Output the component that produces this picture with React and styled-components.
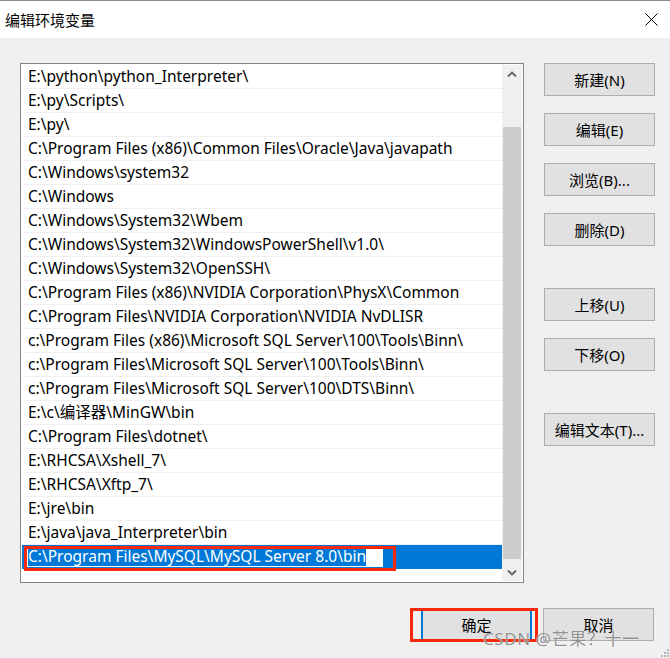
import React from 'react';
import styled, { createGlobalStyle } from 'styled-components';

const GlobalStyle = createGlobalStyle`
  html, body {
    margin: 0;
    padding: 0;
    background: #f0f0f0;
  }
  body {
    font-family: "Noto Sans", "Noto Sans CJK SC", sans-serif;
    font-size: 15px;
    color: #000;
  }
`;

const Window = styled.div`
  position: relative;
  width: 670px;
  height: 658px;
  box-sizing: border-box;
  border-top: 1px solid #8c8c8c;
  background: #f0f0f0;
  display: flex;
  flex-direction: column;
  overflow: hidden;
`;

const TitleBar = styled.div`
  height: 37px;
  background: #fff;
  display: flex;
  align-items: center;
  justify-content: space-between;
  padding: 0 12px 0 5px;
`;

const Title = styled.span`
  font-family: "Noto Sans CJK SC", sans-serif;
  font-size: 15px;
  margin-top: -1px;
`;

const Body = styled.div`
  display: flex;
  padding: 25px 0 0 20px;
  gap: 20px;
`;

const ListBox = styled.div`
  width: 504px;
  height: 520px;
  box-sizing: border-box;
  border: 1px solid #838383;
  background: #fff;
  padding: 1px;
  display: flex;
`;

const Rows = styled.div`
  flex: 1;
  display: flex;
  flex-direction: column;
`;

const Row = styled.div`
  height: 24px;
  box-sizing: border-box;
  border-bottom: 1px solid ${(p) => (p.$selected ? '#0078d7' : '#f0f0f0')};
  background: ${(p) => (p.$selected ? '#0078d7' : '#fff')};
  display: flex;
  align-items: center;
  padding-left: 6px;
  white-space: nowrap;
  line-height: 1;
  font-size: 15.5px;
`;

const EditBox = styled.span`
  display: flex;
  align-items: center;
  height: 20px;
  width: 356px;
  margin-left: -1px;
  box-sizing: border-box;
  border: 1px solid #fff;
  background: #fff;
`;

const Selected = styled.span`
  background: #0078d7;
  color: #fff;
  height: 100%;
  display: flex;
  align-items: center;
`;

const Scrollbar = styled.div`
  width: 20px;
  background: #f0f0f0;
  display: flex;
  flex-direction: column;
`;

const ArrowButton = styled.div`
  height: 17px;
  display: flex;
  align-items: center;
  justify-content: center;
`;

const Track = styled.div`
  flex: 1;
  display: flex;
  flex-direction: column;
  justify-content: flex-end;
  padding: 0 1px 5px;
`;

const Thumb = styled.div`
  height: 432px;
  background: #cdcdcd;
`;

const ButtonColumn = styled.div`
  display: flex;
  flex-direction: column;
`;

const Button = styled.div`
  width: 111px;
  height: 33px;
  box-sizing: border-box;
  background: #e1e1e1;
  border: 1px solid ${(p) => (p.$focus ? '#0078d7' : '#adadad')};
  box-shadow: ${(p) => (p.$focus ? 'inset 0 0 0 1px #0078d7' : 'none')};
  display: flex;
  align-items: center;
  justify-content: center;
  font-family: "Noto Sans", "Noto Sans CJK SC", sans-serif;
  font-size: 15px;
  margin-top: ${(p) => p.$gap || 0}px;
`;

const Footer = styled.div`
  display: flex;
  justify-content: flex-end;
  gap: 11px;
  padding: 25px 16px 0 0;
`;

const Mark = styled.div`
  position: absolute;
  border: 3px solid #f5280a;
  pointer-events: none;
`;

const Watermark = styled.div`
  position: absolute;
  z-index: 2;
  left: 483px;
  top: 624px;
  font-family: "Noto Sans", "Noto Sans CJK SC", sans-serif;
  font-size: 17px;
  color: rgba(125, 125, 125, 0.85);
  text-shadow: 0 0 1px #fff;
  letter-spacing: 0.6px;
  white-space: nowrap;
`;

const Grip = styled.svg`
  position: absolute;
  right: 1px;
  bottom: 1px;
`;

const paths = [
  'E:\\python\\python_Interpreter\\',
  'E:\\py\\Scripts\\',
  'E:\\py\\',
  'C:\\Program Files (x86)\\Common Files\\Oracle\\Java\\javapath',
  'C:\\Windows\\system32',
  'C:\\Windows',
  'C:\\Windows\\System32\\Wbem',
  'C:\\Windows\\System32\\WindowsPowerShell\\v1.0\\',
  'C:\\Windows\\System32\\OpenSSH\\',
  'C:\\Program Files (x86)\\NVIDIA Corporation\\PhysX\\Common',
  'C:\\Program Files\\NVIDIA Corporation\\NVIDIA NvDLISR',
  'c:\\Program Files (x86)\\Microsoft SQL Server\\100\\Tools\\Binn\\',
  'c:\\Program Files\\Microsoft SQL Server\\100\\Tools\\Binn\\',
  'c:\\Program Files\\Microsoft SQL Server\\100\\DTS\\Binn\\',
  'E:\\c\\编译器\\MinGW\\bin',
  'C:\\Program Files\\dotnet\\',
  'E:\\RHCSA\\Xshell_7\\',
  'E:\\RHCSA\\Xftp_7\\',
  'E:\\jre\\bin',
  'E:\\java\\java_Interpreter\\bin',
];

const Chevron = ({ up }) => (
  <svg width="10" height="6" viewBox="0 0 10 6">
    <path
      d={up ? 'M1 5.5 L5 1.5 L9 5.5' : 'M1 0.5 L5 4.5 L9 0.5'}
      fill="none"
      stroke="#606060"
      strokeWidth="1.8"
    />
  </svg>
);

const App = () => {
  return (
    <Window>
      <GlobalStyle />
      <TitleBar>
        <Title>编辑环境变量</Title>
        <svg width="13" height="13" viewBox="0 0 13 13">
          <path d="M0.5 0.5 L12.5 12.5 M12.5 0.5 L0.5 12.5" stroke="#000" strokeWidth="1" />
        </svg>
      </TitleBar>
      <Body>
        <ListBox>
          <Rows>
            {paths.map((p) => (
              <Row key={p}>{p}</Row>
            ))}
            <Row $selected>
              <EditBox>
                <Selected>C:\Program Files\MySQL\MySQL Server 8.0\bin</Selected>
              </EditBox>
            </Row>
          </Rows>
          <Scrollbar>
            <ArrowButton>
              <Chevron up />
            </ArrowButton>
            <Track>
              <Thumb />
            </Track>
            <ArrowButton>
              <Chevron />
            </ArrowButton>
          </Scrollbar>
        </ListBox>
        <ButtonColumn>
          <Button>新建(N)</Button>
          <Button $gap={17}>编辑(E)</Button>
          <Button $gap={17}>浏览(B)...</Button>
          <Button $gap={17}>删除(D)</Button>
          <Button $gap={42}>上移(U)</Button>
          <Button $gap={17}>下移(O)</Button>
          <Button $gap={42}>编辑文本(T)...</Button>
        </ButtonColumn>
      </Body>
      <Footer>
        <Button $focus>确定</Button>
        <Button>取消</Button>
      </Footer>
      <Mark style={{ left: 24, top: 545, width: 366, height: 19 }} />
      <Mark style={{ left: 410, top: 607, width: 122, height: 28 }} />
      <Watermark>CSDN @芒果？十一</Watermark>
      <Grip width="8" height="8" viewBox="0 0 8 8">
        <rect x="6" y="0" width="2" height="2" fill="#b8b8b8" />
        <rect x="3" y="3" width="2" height="2" fill="#b8b8b8" />
        <rect x="6" y="3" width="2" height="2" fill="#b8b8b8" />
        <rect x="0" y="6" width="2" height="2" fill="#b8b8b8" />
        <rect x="3" y="6" width="2" height="2" fill="#b8b8b8" />
        <rect x="6" y="6" width="2" height="2" fill="#b8b8b8" />
      </Grip>
    </Window>
  );
};

export default App;
